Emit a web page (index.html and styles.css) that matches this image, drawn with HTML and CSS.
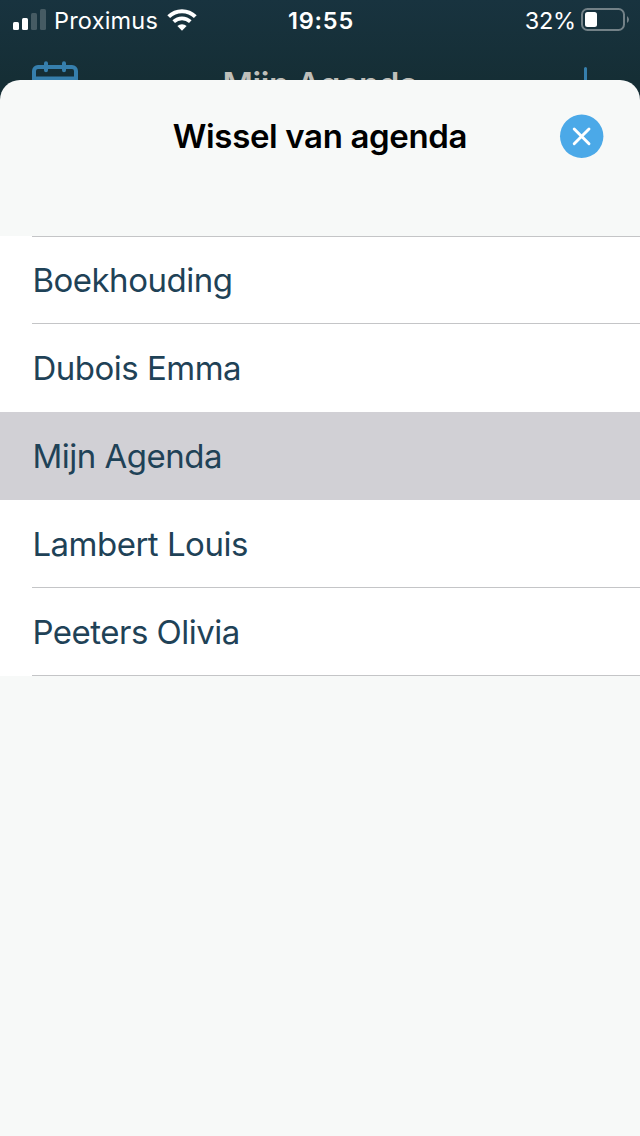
FILE: index.html
```html
<!DOCTYPE html>
<html lang="nl">
<head>
    <meta charset="UTF-8" />
    <meta name="viewport" content="width=device-width, initial-scale=1.0" />
    <title>Wissel van agenda</title>
    <link rel="stylesheet" href="styles.css">
</head>
<body>
    <div class="screen">
        <div class="statusbar">
            <div class="carrier">
                <svg class="signal" width="34" height="22" viewBox="0 0 34 22">
                    <rect x="0" y="13" width="6" height="8" rx="1.5" fill="#fff" />
                    <rect x="9" y="9" width="6" height="12" rx="1.5" fill="#fff" />
                    <rect x="18" y="4" width="6" height="17" rx="1.5" fill="#465b63" />
                    <rect x="27" y="0" width="6" height="21" rx="1.5" fill="#465b63" />
                </svg>
                <span class="carrier-name">Proximus</span>
                <svg class="wifi" width="30" height="22" viewBox="0 0 30 22" fill="none" stroke="#fff">
                    <path d="M1.7 7.6 A19 19 0 0 1 28.3 7.6" stroke-width="4" />
                    <path d="M6.7 12.7 A12 12 0 0 1 23.3 12.7" stroke-width="3.7" />
                    <path d="M15 21.8 L10.4 17.1 A6.6 6.6 0 0 1 19.6 17.1 Z" fill="#fff" stroke="none" />
                </svg>
            </div>
            <div class="time">19:55</div>
            <div class="battery">
                <span class="percent">32%</span>
                <svg width="48" height="24" viewBox="0 0 48 24">
                    <rect x="1" y="1" width="42" height="21" rx="5.5" fill="none" stroke="#738187" stroke-width="2" />
                    <rect x="4" y="4" width="12" height="15" rx="2.5" fill="#fff" />
                    <path d="M46 8 Q48 9.5 48 11.5 T46 15 Z" fill="#738187" />
                </svg>
            </div>
        </div>

        <div class="navbar">
            <svg class="calendar" width="46" height="44" viewBox="0 0 46 44" fill="none" stroke="#367fad" stroke-width="4" stroke-linecap="round">
                <rect x="2" y="6" width="42" height="36" rx="4" />
                <path d="M2 17.5 H44 M14 2.2 V9.2 M32 2.2 V9.2" />
            </svg>
            <div class="nav-title">Mijn Agenda</div>
            <svg class="plus" width="38" height="38" viewBox="0 0 38 38" stroke="#367fad" stroke-width="3" stroke-linecap="round">
                <path d="M19.5 1.5 V36 M2 19 H36" />
            </svg>
        </div>

        <div class="sheet">
            <div class="sheet-header">
                <h1>Wissel van agenda</h1>
                <button class="close" aria-label="Sluiten">
                    <svg width="44" height="44" viewBox="0 0 44 44">
                        <circle cx="21.7" cy="22.3" r="21.7" fill="#4ba9e8" />
                        <path d="M14.2 15 L29 29.8 M29 15 L14.2 29.8" stroke="#fff" stroke-width="2.9" stroke-linecap="round" />
                    </svg>
                </button>
            </div>

            <ul class="list">
                <li><span>Boekhouding</span></li>
                <li><span>Dubois Emma</span></li>
                <li class="selected"><span>Mijn Agenda</span></li>
                <li><span>Lambert Louis</span></li>
                <li><span>Peeters Olivia</span></li>
            </ul>
        </div>
    </div>
</body>
</html>
```

FILE: styles.css
```css
* {
    box-sizing: border-box;
}
body {
    margin: 0;
    font-family: "Inter", "Liberation Sans", sans-serif;
    background-color: #16303a;
}
.screen {
    display: flex;
    flex-direction: column;
    height: 1136px;
    overflow: hidden;
    background: linear-gradient(#18333f 0, #152e35 80px);
}
.statusbar {
    display: grid;
    grid-template-columns: 1fr auto 1fr;
    align-items: center;
    height: 40px;
    padding: 0 11px 0 13px;
    color: #fff;
    font-size: 23.5px;
}
.carrier,
.battery {
    display: flex;
    align-items: center;
}
.battery {
    justify-content: flex-end;
}
.carrier-name {
    margin: 0 8px 0 7px;
    letter-spacing: 0.2px;
}
.wifi {
    margin-left: 1px;
}
.time {
    font-weight: 600;
    font-size: 23.5px;
    letter-spacing: 0.8px;
}
.percent {
    margin: 0 5px 0 0;
    letter-spacing: -0.2px;
}
.navbar {
    display: flex;
    justify-content: space-between;
    align-items: flex-start;
    flex: none;
    height: 40px;
    padding: 21px 36px 0 32px;
    overflow: hidden;
}
.nav-title {
    margin: 2px 0 0 -4px;
    font-size: 33px;
    font-weight: 600;
    line-height: 42px;
    letter-spacing: -0.4px;
    color: #bfbfba;
}
.plus {
    margin-top: 6px;
}
.sheet {
    flex: 1;
    background-color: #f7f9f8;
    border-radius: 20px 20px 0 0;
}
.sheet-header {
    display: grid;
    grid-template-columns: 1fr auto 1fr;
    align-items: center;
    height: 156px;
    padding: 0 36px 44px;
}
h1 {
    grid-column: 2;
    margin: 0;
    font-size: 33px;
    font-weight: 600;
    letter-spacing: -0.35px;
    color: #000;
}
.close {
    justify-self: end;
    height: 44px;
    padding: 0;
    border: none;
    background: none;
}
.close svg {
    display: block;
    overflow: visible;
}
.list {
    margin: 0;
    padding: 0;
    list-style: none;
    background: linear-gradient(#c4c5c7, #c4c5c7) 32px 0 / 100% 1px no-repeat #fff;
}
.list li {
    height: 88px;
    padding-left: 32px;
}
.list span {
    display: block;
    height: 88px;
    border-bottom: 1px solid #c4c5c7;
    font-size: 33px;
    line-height: 89px;
    letter-spacing: -0.5px;
    text-indent: 0.4px;
    color: #1f4257;
}
.list .selected {
    background-color: #d1d0d5;
}
.list .selected span,
.list li:nth-child(2) span {
    border-bottom: none;
}
```
